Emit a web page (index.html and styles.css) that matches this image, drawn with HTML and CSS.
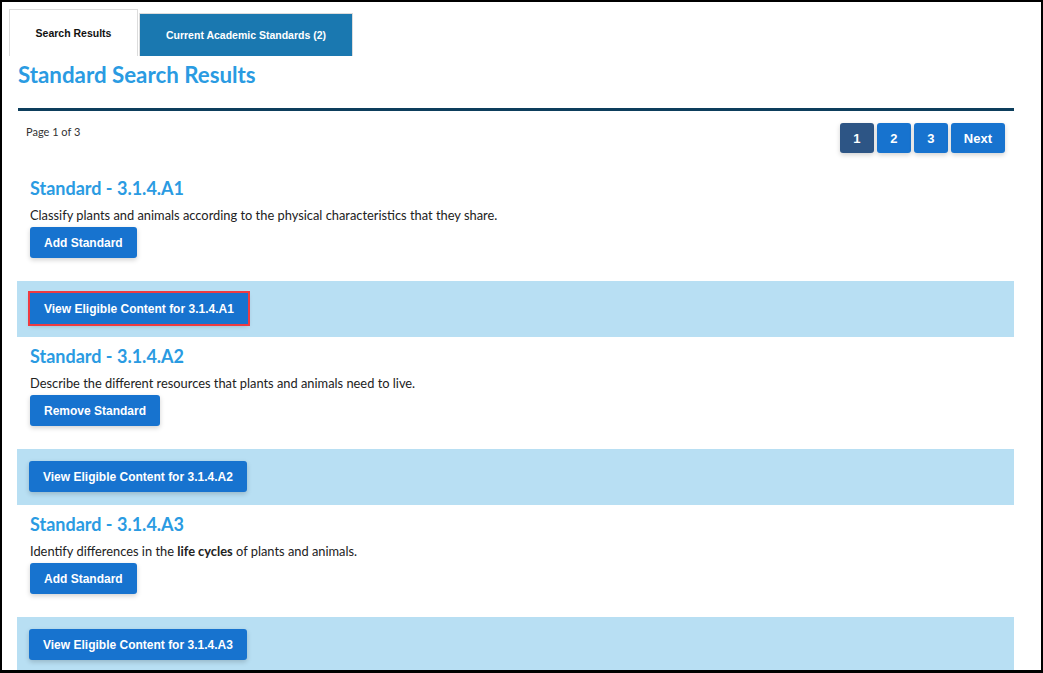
FILE: index.html
```html
<!DOCTYPE html>
<html lang="en">
<head>
  <meta charset="UTF-8">
  <meta name="viewport" content="width=device-width, initial-scale=1.0">
  <title>Standard Search Results</title>
  <link rel="stylesheet" href="styles.css">
</head>
<body>
  <div class="frame">
    <div class="tabs">
      <div class="tab active">Search Results</div>
      <div class="tab">Current Academic Standards (2)</div>
    </div>
    <div class="content">
      <h1 class="title">Standard Search Results</h1>
      <div class="pager-row">
        <div class="page-info">Page 1 of 3</div>
        <div class="pager">
          <button class="current">1</button>
          <button>2</button>
          <button>3</button>
          <button>Next</button>
        </div>
      </div>

      <div class="standard">
        <h2>Standard - 3.1.4.A1</h2>
        <p>Classify plants and animals according to the physical characteristics that they share.</p>
        <button class="btn">Add Standard</button>
      </div>
      <div class="band">
        <button class="btn focused">View Eligible Content for 3.1.4.A1</button>
      </div>

      <div class="standard">
        <h2>Standard - 3.1.4.A2</h2>
        <p>Describe the different resources that plants and animals need to live.</p>
        <button class="btn">Remove Standard</button>
      </div>
      <div class="band">
        <button class="btn">View Eligible Content for 3.1.4.A2</button>
      </div>

      <div class="standard">
        <h2>Standard - 3.1.4.A3</h2>
        <p>Identify differences in the <b>life cycles</b> of plants and animals.</p>
        <button class="btn">Add Standard</button>
      </div>
      <div class="band">
        <button class="btn">View Eligible Content for 3.1.4.A3</button>
      </div>
    </div>
  </div>
</body>
</html>
```

FILE: styles.css
```css
html, body {
  margin: 0;
  padding: 0;
  height: 100%;
  overflow: hidden;
}
body {
  font-family: Lato, "Liberation Sans", sans-serif;
  color: #222;
  background: #fff;
}
.frame {
  box-sizing: border-box;
  width: 1043px;
  height: 673px;
  border: 2px solid #000;
  border-bottom-width: 3px;
  overflow: hidden;
  padding: 7px 0 0 7px;
}
.tabs {
  display: flex;
  align-items: flex-end;
  gap: 1px;
}
.tab {
  box-sizing: border-box;
  height: 43px;
  width: 214px;
  display: flex;
  align-items: center;
  justify-content: center;
  font-family: "Liberation Sans", sans-serif;
  font-weight: bold;
  font-size: 10.5px;
  color: #fff;
  background: #1a78b0;
  border: 1px solid #dcdcdc;
  border-bottom: none;
  padding-bottom: 1px;
}
.tab.active {
  height: 47px;
  width: 129px;
  color: #111;
  background: #fff;
  padding-bottom: 0;
}
.content {
  width: 997px;
  margin-left: 8px;
}
.title {
  margin: 7px 0 0 1px;
  font-size: 22.3px;
  line-height: 24px;
  font-weight: bold;
  color: #2a9be2;
  padding-bottom: 21px;
  border-bottom: 3px solid #0d3e5c;
}
.pager-row {
  display: flex;
  justify-content: space-between;
  align-items: flex-start;
  padding: 12px 9px 16px 9px;
}
.page-info {
  font-size: 11px;
  padding-top: 2px;
  color: #333;
}
.pager {
  display: flex;
  gap: 3px;
}
.pager button, .btn {
  font-family: "Liberation Sans", sans-serif;
  font-weight: bold;
  color: #fff;
  background: #1773cf;
  border: none;
  border-radius: 3px;
  box-shadow: 0 2px 5px rgba(0, 0, 0, 0.18);
  cursor: pointer;
}
.pager button {
  height: 30px;
  min-width: 34px;
  padding: 0 12px;
  font-size: 13px;
}
.pager button:last-child {
  padding: 0 13px;
}
.pager button.current {
  background: #2d5585;
}
.standard {
  padding: 7px 13px 23px 13px;
}
.standard h2 {
  margin: 0;
  font-size: 18px;
  line-height: 24px;
  font-weight: bold;
  color: #2a9be2;
}
.standard p {
  margin: 6px 0 3px;
  font-size: 12.85px;
  line-height: 18px;
}
.standard p b {
  font-weight: bold;
}
.btn {
  height: 31px;
  padding: 0 14px;
  font-size: 12px;
}
.band {
  height: 56px;
  box-sizing: border-box;
  padding: 12px 12px 0;
  background: #b8dff3;
}
.btn.focused {
  border-radius: 0;
  outline: 2px solid #ee3b41;
  outline-offset: 0;
  margin-left: 1px;
  padding: 0 14px;
}
```
